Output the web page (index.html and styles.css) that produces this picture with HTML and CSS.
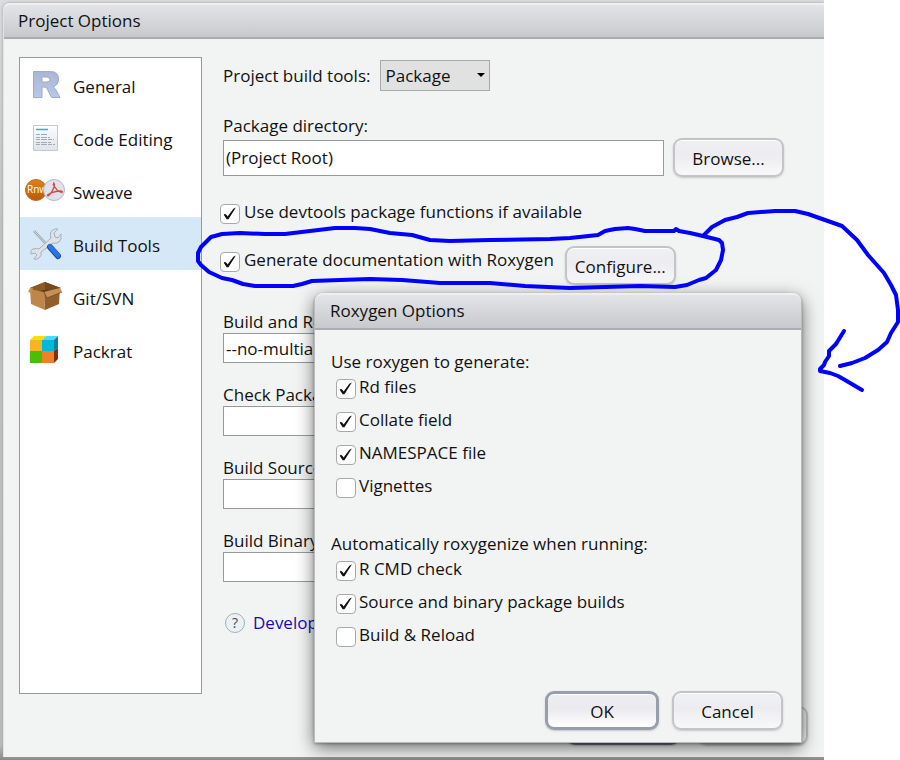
FILE: index.html
```html
<!DOCTYPE html>
<html lang="en">
<head>
<meta charset="utf-8">
<title>Project Options</title>
<link rel="stylesheet" href="styles.css">
</head>
<body>
<div class="stage">
  <div class="backdrop">
    <section class="dialog project" aria-labelledby="project-title">
      <h1 class="titlebar" id="project-title">Project Options</h1>
      <div class="project-body">
        <nav class="sidebar">
          <a class="item" href="#general">
            <svg class="icon" viewBox="0 0 40 40"><defs><linearGradient id="r" x2="0" y2="1"><stop stop-color="#a9b5d3"/><stop offset="1" stop-color="#b9c8e8"/></linearGradient></defs><path fill="url(#r)" stroke="#a2abc2" fill-rule="evenodd" d="M8.500 7.500h17q8 0 8 7.500 0 6-5.500 8 2 1 3 3l4 7.500h-8.500l-4.500-9q-1-1.500-3-1.500h-2v10.500h-8.500zM17 13v5h5q3 0 3-2.500t-3-2.500z"/></svg>
            General</a>
          <a class="item" href="#editing">
            <svg class="icon" viewBox="0 0 40 40"><defs><linearGradient id="pg" x2="0" y2="1"><stop stop-color="#fdfdfe"/><stop offset="1" stop-color="#dde3eb"/></linearGradient></defs><path fill="url(#pg)" stroke="#c5c9ce" d="M8.500 8.500h24v25h-24z"/><path stroke="#42acd0" stroke-width="1.500" d="M11 12.500h12"/><path stroke="#a4a9b2" stroke-dasharray="4 1 6 1" d="M11 17.500h11M11 20.500h14M11 22.500h18M11 25.500h15M11 27.500h19"/></svg>
            Code Editing</a>
          <a class="item" href="#sweave">
            <svg class="icon" viewBox="0 0 40 40"><defs><linearGradient id="o" x2="0" y2="1"><stop stop-color="#db8316"/><stop offset="1" stop-color="#bd5807"/></linearGradient></defs><circle cx="11" cy="20" r="10.500" fill="url(#o)" stroke="#b8702a"/><text class="rnw" x="2" y="23">Rnw</text><circle cx="29" cy="20" r="10.500" fill="#dfe1e8" stroke="#b4b9c3"/><path fill="none" stroke="#d84444" stroke-width="1.300" d="M28 13q2 0 1 4-2 6-6 9-2-1 3-3 5-2 9-2 3 0 2 1.500-5-.5-9-8.500"/></svg>
            Sweave</a>
          <a class="item selected" href="#build" aria-current="page">
            <svg class="icon" viewBox="0 0 40 40"><path stroke="#99a1ab" stroke-width="2.500" d="M9 8l15 16"/><path stroke="#d9dde1" d="M9 8l15 16"/><path fill="#dfe3e8" stroke="#a7b0ba" d="M8 26q4-1 6 0L26 15q-2-6 2-8 3-2 5-1l-4 4 1 4 3 1 3-4q1 6-2 8-3 2-6 1L16 29q1 4-2 6-2 2-5 1l3-4-2-2-4 1q-1-4 2-5z"/><path stroke="#174ca8" stroke-width="6" stroke-linecap="round" d="M25 24l8 9"/><path stroke="#2f74e0" stroke-width="4.500" stroke-linecap="round" d="M25 23.500l8 9"/></svg>
            Build Tools</a>
          <a class="item" href="#vcs">
            <svg class="icon" viewBox="0 0 40 40"><path fill="#5d3814" d="M5 12l15-6 16 6-16 6z"/><path fill="#8b5a26" d="M5 12l15-6v8l-12 2z"/><path fill="#74491d" d="M20 6l15 6-6 3-9-1z"/><path fill="#be8649" d="M5 13l14 3 1 18-14-6z"/><path fill="#925f2c" d="M19 16l16-4-1 16-14 6z"/><path fill="#c69056" d="M5 12L3 16l3 1 2-5zM35 12l2 4-15 6-3-6z"/><path fill="none" stroke="#704618" stroke-width=".7" d="M37 16l-15 6-3-6"/></svg>
            Git/SVN</a>
          <a class="item" href="#packrat">
            <svg class="icon" viewBox="0 0 40 40"><path fill="#f5b624" d="M5 11h12v11H5z"/><path fill="#00b8df" d="M17 11h12v11H17z"/><path fill="#4cbd08" d="M5 22h12v12H5z"/><path fill="#f47f24" d="M17 22h12v12H17z"/><path fill="#ffdd00" d="M5 11l4-4h12l-4 4z"/><path fill="#4bd9ff" d="M17 11l4-4h12l-4 4z"/><path fill="#08819e" d="M29 11l4-4v12l-4 3z"/><path fill="#832f0b" d="M29 22l4-3v11l-4 4z"/></svg>
            Packrat</a>
        </nav>
        <form class="form">
          <div class="tools-row">
            <label for="tools">Project build tools:</label>
            <span class="select-wrap"><select id="tools"><option>Package</option></select></span>
          </div>
          <label class="directory-label" for="directory">Package directory:</label>
          <div class="directory-row">
            <input class="field" id="directory" type="text" value="(Project Root)">
            <button class="button" type="button">Browse...</button>
          </div>
          <label class="check devtools"><input type="checkbox" checked>Use devtools package functions if available</label>
          <div class="roxygen-row">
            <label class="check"><input type="checkbox" checked>Generate documentation with Roxygen</label>
            <button class="button" type="button">Configure...</button>
          </div>
          <div class="options">
            <div class="option"><label for="reload">Build and Re</label><input class="field" id="reload" type="text" value="--no-multiarch"></div>
            <div class="option"><label for="check">Check Packa</label><input class="field" id="check" type="text"></div>
            <div class="option"><label for="source">Build Source</label><input class="field" id="source" type="text"></div>
            <div class="option"><label for="binary">Build Binary</label><input class="field" id="binary" type="text"></div>
          </div>
          <div class="help"><span class="help-mark">?</span><a href="#help">Develop</a></div>
        </form>
      </div>
      <div class="actions">
        <button class="button primary dimmed" type="button" aria-label="OK"></button>
        <button class="button" type="button" aria-label="Cancel"></button>
      </div>
    </section>
  </div>

  <section class="dialog roxygen" role="dialog" aria-labelledby="roxygen-title">
    <h2 class="titlebar" id="roxygen-title">Roxygen Options</h2>
    <div class="roxygen-body">
      <fieldset>
        <legend>Use roxygen to generate:</legend>
        <label class="check"><input type="checkbox" checked>Rd files</label>
        <label class="check"><input type="checkbox" checked>Collate field</label>
        <label class="check"><input type="checkbox" checked>NAMESPACE file</label>
        <label class="check"><input type="checkbox">Vignettes</label>
      </fieldset>
      <fieldset>
        <legend>Automatically roxygenize when running:</legend>
        <label class="check"><input type="checkbox" checked>R CMD check</label>
        <label class="check"><input type="checkbox" checked>Source and binary package builds</label>
        <label class="check"><input type="checkbox">Build &amp; Reload</label>
      </fieldset>
      <div class="roxygen-actions">
        <button class="button primary" type="button">OK</button>
        <button class="button" type="button">Cancel</button>
      </div>
    </div>
  </section>

  <svg class="ink" viewBox="0 0 900 760" width="900" height="760" aria-hidden="true">
    <path d="M703 236L690 233 679 231 676 229 674 231 645 231 635 229 628 228 615 229 605 231 598 235 570 238 550 239 490 240 450 241 430 240 412 235 390 233 370 229 355 228 335 228 310 231 285 234 265 234 240 233 222 234 211 237 201 247 198 253 198 261 201 265 209 272 222 278 232 280 243 284 255 286 275 286 293 286 302 284 312 281 340 280 370 279 402 280 440 283 490 283 525 286 570 288 640 286 675 287 687 285 699 280 706 278 716 270 721 260 723 250 722 243 719 240 703 236"/>
    <path d="M703 236L712 227 725 220 737 217 748 213 775 211 795 211 808 214 825 220 842 226 857 240 868 255 884 273 891 285 896 295 898 310 898 322 891 333 887 342 878 350 865 358 852 363 840 366"/>
    <path d="M844 331L836 344 829 351 829 356 825 362 824 365 820 369 820 371 830 373 838 376 845 380 862 390"/>
  </svg>
</div>
</body>
</html>
```
FILE: styles.css
```css
* { box-sizing: border-box; }

body {
  margin: 0;
  background: #fff;
  color: #111;
  font: 17px/24px "Open Sans", "Noto Sans", sans-serif;
}

button, input, select { font: inherit; color: inherit; margin: 0; }

.stage { position: relative; min-height: 100vh; display: flex; overflow: hidden; }

.backdrop {
  flex: 1;
  display: flex;
  margin-right: 76px;
  padding: 3px 0 3px 3px;
  overflow: hidden;
  background: linear-gradient(#dcdcde, #c2c3c5 30%, #bdbdbf 98%, #8b8889);
}

.dialog { display: flex; flex-direction: column; background: #f2f4f4; }

.project { flex: 1; border-radius: 6px 0 0 0; box-shadow: 0 0 3px #999; border-left: 1px solid #e2e3e5; }

.titlebar {
  margin: 0;
  height: 36px;
  padding: 4px 15px;
  font-size: 17px;
  line-height: 24px;
  font-weight: normal;
  background: linear-gradient(#e3e4e8, #c8c9cd);
  border-top: 2px solid #efeff2;
  border-bottom: 2px solid #abacb2;
  border-radius: 8px 8px 0 0;
}

.project .titlebar { border-radius: 6px 0 0 0; padding-left: 14px; }

.project-body { flex: 1; display: flex; padding: 18px 40px 0 15px; gap: 18px; }

.sidebar { width: 183px; flex: none; background: #fff; border: 1px solid #999; }

.item {
  display: flex;
  align-items: center;
  gap: 8px;
  height: 53px;
  padding: 4px 5px 0;
  color: inherit;
  text-decoration: none;
}

.item .icon { align-self: flex-start; }
.selected { background: #d5e8f7; }
.icon { width: 40px; height: 40px; margin-top: 2px; flex: none; fill: none; }
.rnw { font: 10px "Open Sans", sans-serif; fill: #fff; }

.form { flex: 1; padding: 3px 0 0 3px; min-width: 0; }

.tools-row { display: flex; align-items: center; gap: 10px; }
.select-wrap { position: relative; display: flex; }
.select-wrap::after {
  content: "";
  position: absolute;
  right: 5px;
  top: 13px;
  border: 4px solid transparent;
  border-top-color: #000;
  border-bottom: 0;
}
select {
  appearance: none;
  width: 110px;
  height: 31px;
  padding: 0 4px;
  border: 1px solid #aaa;
  border-radius: 0;
  background: #e1e1e1;
}

.directory-label { display: block; margin-top: 23px; }
.directory-row { display: flex; align-items: center; gap: 9px; }
.field {
  height: 30px;
  width: 100%;
  min-width: 0;
  padding: 0 2px;
  background: #fff;
  border: 1px solid #999;
  border-radius: 0;
}
.directory-row .field { flex: 1; height: 36px; }

.button {
  width: 111px;
  height: 39px;
  padding: 2px 0 0;
  flex: none;
  border: 2px solid #c3c4c6;
  border-radius: 9px;
  background: linear-gradient(#f0f0f4, #ededf1 45%, #f8f8f9);
  box-shadow: 0 1px 2px #c6c7c9, inset 0 1px #fff;
}
.primary { width: 114px; border: 3px solid #979fac; background: linear-gradient(#eeeef2, #ebebef 45%, #fff); }

.check { display: flex; align-items: flex-end; gap: 4px; height: 24px; line-height: 24px; white-space: nowrap; }
.check input {
  appearance: none;
  width: 20px;
  height: 20px;
  flex: none;
  display: grid;
  place-items: center;
  background: #fff;
  border: 1px solid #a9a9ab;
  border-radius: 4px;
}
.check input:checked::before {
  content: "";
  width: 14px;
  height: 14px;
  background: #111;
  clip-path: polygon(5% 56%, 14% 48%, 24% 56%, 33% 68%, 74% 12%, 92% 4%, 39% 88%, 26% 88%);
}

.devtools { margin: 23px 0 0 -3px; }
.roxygen-row { display: flex; align-items: flex-start; gap: 11px; margin: 22px 0 0 -3px; }
.roxygen-row .check { margin-top: 2px; }

.options { display: grid; gap: 20px; margin-top: 25px; }
.option label { display: block; line-height: 23px; white-space: nowrap; }
.option .field { display: block; }

.help { display: flex; align-items: center; gap: 8px; margin-top: 29px; padding-left: 2px; }
.help a { color: #1a0dab; text-decoration: none; }
.help-mark {
  width: 20px;
  height: 20px;
  border: 1px solid #9fb0bd;
  border-radius: 50%;
  background: #edf1f4;
  color: #3a4a58;
  font-size: 14px;
  line-height: 18px;
  text-align: center;
}

.actions { display: flex; justify-content: flex-end; gap: 17px; padding: 12px 16px 12px 0; }
.dimmed { border-color: #6c727e; }

/* Modal opened by the Configure button, over the project dialog */
.roxygen {
  position: absolute;
  left: 314px;
  top: 293px;
  width: 488px;
  border: 1px solid #b9babd;
  border-top: 0;
  border-radius: 9px 9px 0 0;
  box-shadow: 0 5px 18px rgba(0, 0, 0, .55), 0 1px 3px rgba(0, 0, 0, .3);
}
.roxygen .titlebar { height: 37px; }
.roxygen-body { padding: 20px 18px 12px 16px; }
fieldset { margin: 0; padding: 0 0 0 5px; border: 0; display: grid; }
fieldset + fieldset { margin-top: 26px; }
legend { padding: 0; margin-left: -5px; }
fieldset .check { margin: 1px 0 8px; }
.roxygen .check { gap: 3px; }
.roxygen-actions { display: flex; justify-content: flex-end; gap: 13px; margin-top: 36px; }

/* Hand-drawn marker strokes */
.ink { position: absolute; left: 0; top: 0; pointer-events: none; }
.ink path { fill: none; stroke: #00f; stroke-width: 4; stroke-linecap: round; stroke-linejoin: round; }
```
